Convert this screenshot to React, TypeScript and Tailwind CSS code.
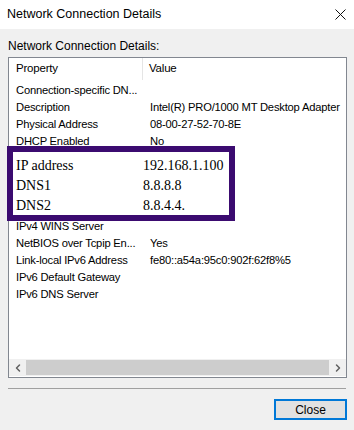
import { ChevronLeft, ChevronRight } from "lucide-react";

// rows under the purple box are hidden, so they are left blank
const topRows = [
  ["Connection-specific DN...", ""],
  ["Description", "Intel(R) PRO/1000 MT Desktop Adapter"],
  ["Physical Address", "08-00-27-52-70-8E"],
  ["DHCP Enabled", "No"],
  ["", ""],
  ["", ""],
  ["", ""],
  ["", ""],
  ["IPv4 WINS Server", ""],
  ["NetBIOS over Tcpip En...", "Yes"],
  ["Link-local IPv6 Address", "fe80::a54a:95c0:902f:62f8%5"],
  ["IPv6 Default Gateway", ""],
  ["IPv6 DNS Server", ""],
];

const highlighted = [
  ["IP address", "192.168.1.100"],
  ["DNS1", "8.8.8.8"],
  ["DNS2", "8.8.4.4."],
];

const App = () => {
  return (
    <div className="w-[354px] h-[430px] bg-[#f0f0f0] flex flex-col font-['Liberation_Sans',Arial,sans-serif] text-[11.2px] tracking-[-0.2px] text-black overflow-hidden">
      <div className="h-[29px] bg-white flex items-center justify-between pl-[7px] pr-[7px] shrink-0">
        <span className="text-[12.5px] tracking-normal">Network Connection Details</span>
        <svg width="11" height="11" viewBox="0 0 11 11" className="mr-[1px]">
          <path d="M0.5 0.5 L10.5 10.5 M10.5 0.5 L0.5 10.5" stroke="#111" strokeWidth="1" />
        </svg>
      </div>

      <div className="pl-[8px] pt-[10px] h-[28px] leading-[14px] text-[12px] tracking-normal">
        Network Connection Details:
      </div>

      <div className="relative ml-[8px] mr-[7px] h-[321px] border border-[#828790] bg-white flex flex-col">
        <div className="h-[22px] flex items-center shrink-0 text-[11.5px]">
          <div className="w-[134px] shrink-0 h-full border-r border-[#e5e5e5] pl-[7px] flex items-center">Property</div>
          <div className="pl-[6px]">Value</div>
        </div>
        <div className="flex-1 pt-[2px]">
          {topRows.map(([k, v], i) => (
            <div key={i} className="h-[17px] flex items-center">
              <div className="w-[134px] shrink-0 pl-[7px] whitespace-nowrap">{k}</div>
              <div className="pl-[7px] whitespace-nowrap">{v}</div>
            </div>
          ))}
        </div>
        <div className="h-[17px] flex items-stretch shrink-0 bg-[#f0f0f0] mb-[1px]">
          <div className="w-[17px] flex items-center justify-center text-[#606060]">
            <ChevronLeft size={12} strokeWidth={3} />
          </div>
          <div className="flex-1 bg-[#cdcdcd] my-[1px]" />
          <div className="w-[17px] flex items-center justify-center text-[#606060]">
            <ChevronRight size={12} strokeWidth={3} />
          </div>
        </div>

        <div className="absolute left-[-2px] top-[88px] w-[228px] h-[75px] border-[6px] border-[#3b0b70] bg-white pt-[3px] pl-[3px] font-['Liberation_Serif','Times_New_Roman',serif] text-[14px] tracking-normal">
          {highlighted.map(([k, v]) => (
            <div key={k} className="h-[20px] flex items-center">
              <div className="w-[127px] shrink-0">{k}</div>
              <div>{v}</div>
            </div>
          ))}
        </div>
      </div>

      <div className="mx-[8px] mt-[10px] h-[1px] bg-[#a0a0a0]" />

      <div className="flex justify-end pr-[7px] pt-[10px]">
        <button className="w-[73px] h-[21px] border-2 border-[#0078d7] bg-[#e1e1e1] flex items-center justify-center text-[12px] tracking-normal">
          Close
        </button>
      </div>
    </div>
  );
};

export default App;
